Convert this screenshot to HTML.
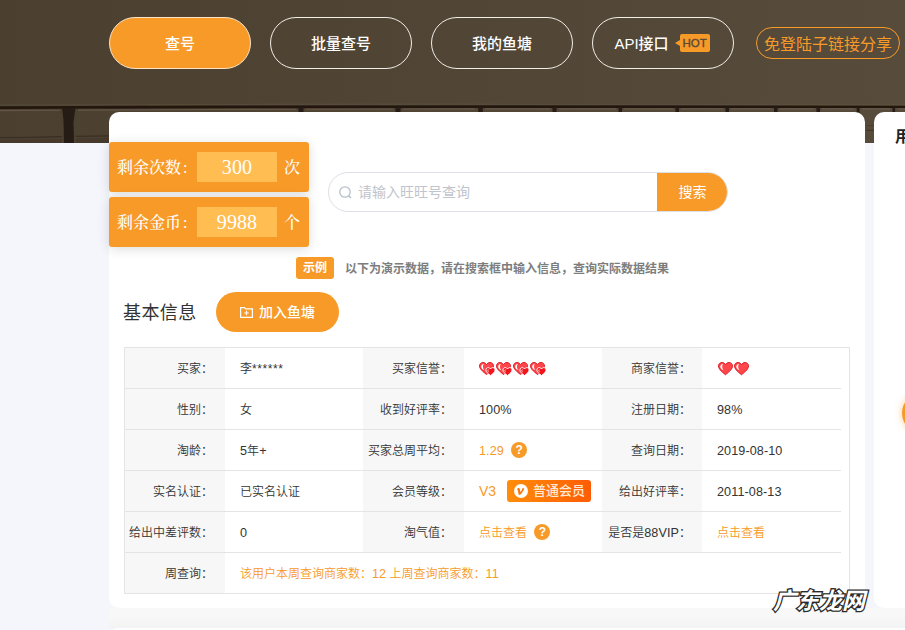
<!DOCTYPE html>
<html lang="zh-CN">
<head>
<meta charset="utf-8">
<title>查号</title>
<style>
*{box-sizing:border-box;margin:0;padding:0}
html,body{width:905px;height:630px;overflow:hidden}
body{position:relative;background:#f5f6fb;font-family:"Liberation Sans","Noto Sans CJK SC",sans-serif;color:#333;font-size:12px}
.abs{position:absolute}
#hdr{position:absolute;left:0;top:0;width:905px;height:143px;background:linear-gradient(90deg,#4b3f30,#574b3c);overflow:hidden}
#hdr svg{position:absolute;left:0;top:0}
.nav{position:absolute;top:17px;height:52px;width:142px;border-radius:26px;border:1px solid #f2eee8;color:#fff;font-size:15px;font-weight:500;text-align:center;line-height:52px;white-space:nowrap}
.nav.on{background:#f79a28;border-color:#fbe3c4}
.hot{display:inline-block;position:relative;background:#f79a28;color:#57483a;font-size:12px;line-height:18px;height:18px;width:30px;text-align:center;border-radius:2px;margin-left:11px;margin-right:2px;vertical-align:2px;font-weight:400;font-size:11.5px;letter-spacing:-.1px;-webkit-text-stroke:.35px #57483a}
.hot:before{content:"";position:absolute;left:-5px;top:6px;border:3px solid transparent;border-left:0;border-right:5px solid #f79a28}
#share{position:absolute;left:756px;top:27px;width:144px;height:32px;border:1px solid #f79a28;border-radius:16px;color:#f79a28;font-size:16px;line-height:33px;text-align:center;white-space:nowrap}
#mid{position:absolute;left:109px;top:608px;width:796px;height:20px;background:linear-gradient(#f8f8f8 40%,#f3f3f3)}
#card{position:absolute;left:109px;top:112px;width:756px;height:496px;background:#fff;border-radius:10px}
#card2{position:absolute;left:109px;top:628px;width:820px;height:20px;background:#fff;border-radius:10px}
#rcard{position:absolute;left:874px;top:112px;width:60px;height:496px;background:#fff;border-radius:10px}
.cnt{position:absolute;left:109px;width:200px;height:50px;background:#f79a28;border-radius:3px;box-shadow:0 2px 12px rgba(0,0,0,.14);color:#fff;font-family:"Liberation Serif","Noto Serif CJK SC",serif;font-size:16px;line-height:51px;font-weight:500}
.cnt .l{position:absolute;left:8px;top:0}
.cnt .n{position:absolute;left:88px;top:10px;width:80px;height:30px;background:#ffbd52;text-align:center;line-height:30px;font-size:20px;font-weight:400}
.cnt .l b{font-weight:inherit;margin-left:2px}
.cnt .u{position:absolute;left:175px;top:0}
#search{position:absolute;left:328px;top:172px;width:400px;height:40px;border:1px solid #dcdfe6;border-radius:20px;background:#fff;overflow:hidden}
#search .ph{position:absolute;left:29px;top:0;line-height:39px;font-size:14px;color:#c0c4cc}
#search .btn{position:absolute;right:-1px;top:-1px;width:71px;height:40px;background:#f79a28;color:#fff;font-size:14px;line-height:41px;text-align:center}
#search svg{position:absolute;left:9px;top:12px}
#eg{position:absolute;left:296px;top:257px;width:38px;height:22px;background:#f79a28;border-radius:3px;color:#fff;font-size:12px;font-weight:700;line-height:23px;text-align:center}
#egt{position:absolute;left:345px;top:258px;line-height:22px;font-size:12px;font-weight:700;color:#7d7d7d;white-space:nowrap}
#h{position:absolute;left:123px;top:299px;font-size:18px;line-height:28px;color:#333;letter-spacing:.4px}
#add{position:absolute;left:216px;top:292px;width:123px;height:40px;border-radius:20px;background:#f79a28;color:#fff;font-size:14px;font-weight:500;line-height:40px;padding-left:43px}
#add svg{position:absolute;left:24px;top:14px}
#tbl{font-weight:350;position:absolute;left:124px;top:347px;width:726px;height:247px;border:1px solid #e4e4e4;background:#fff}
.row{position:absolute;left:0;width:716px;height:41px;border-bottom:1px solid #e4e4e4}
.lab{position:absolute;top:0;height:40px;background:#f7f7f7;text-align:right;padding-right:12px;line-height:42px;color:#333;white-space:nowrap}
.val{position:absolute;top:0;height:40px;line-height:42px;padding-left:15px;white-space:nowrap}
.l3{padding-right:11px}
.or{color:#f79a28}
.hb,.hs{vertical-align:-2.5px}
.hs{margin-right:0;margin-left:0}
.hs:first-child{margin-left:1px}
.q{display:inline-block;width:16px;height:16px;border-radius:50%;background:#f79a28;color:#fff;font-size:12px;font-weight:700;line-height:16px;text-align:center;vertical-align:1px;margin-left:4px}
.v3{font-size:14px;position:relative;top:-1.5px}
.mem{position:absolute;left:43px;top:9px;width:84px;height:22px;border-radius:3px;background:linear-gradient(90deg,#ff8d0a,#ff5c05);color:#ffe9d4;font-size:13px;font-weight:500;line-height:22px;padding-left:26px;letter-spacing:0}
.mem i{position:absolute;left:7px;top:4px;width:14px;height:14px;border-radius:50%;background:#fff}
.mem svg{position:absolute;left:7px;top:4px}
.n{font-size:12.6px;letter-spacing:.1px}
#wm{position:absolute;left:773px;top:586px;font-size:23px;line-height:30px;font-weight:700;font-style:italic;color:#fff;-webkit-text-stroke:2.6px #2a2a2a;paint-order:stroke fill;white-space:nowrap;letter-spacing:0}
#rt{position:absolute;left:895px;top:127px;font-size:16px;font-weight:700;line-height:20px;color:#222}
#ball{position:absolute;left:902px;top:393px;width:40px;height:40px;border-radius:50%;background:#f79a28;box-shadow:0 0 7px rgba(247,154,40,.5)}
</style>
</head>
<body>
<div id="hdr"><svg width="905" height="143" viewBox="0 0 905 143">
<defs><filter id="b1" x="-5%" y="-50%" width="110%" height="200%"><feGaussianBlur stdDeviation="0.55"/></filter></defs>
<path d="M0 105.2 L226 104.5 L452 104.2 L905 104.6" stroke="#5f5344" stroke-width="1.2" fill="none" opacity=".55"/>
<path d="M0 106.3 L226 105.6 L452 105.3 L905 105.7 L905 108 L452 107.9 L226 108.3 L0 109.1Z" fill="#22180f" filter="url(#b1)"/>
<path d="M0 110.6 L60 110.3 M78 110.1 L226 109.5 L296 109.2 M306 109.2 L393 109 M403 109 L475 108.9 M485 108.9 L550 108.9 M559 108.9 L616 108.9 M624 108.9 L673 108.9 M681 108.9 L723 108.9 M731 108.9 L771 108.9 M780 108.9 L814 108.9 M822 108.9 L854 108.9 M862 108.9 L890 108.9 M898 108.9 L905 108.9" stroke="#6b5f50" stroke-width="1.1" fill="none" opacity=".75"/>
<g fill="#261c12" filter="url(#b1)">
<path d="M62 108 L75.500 108 L73.500 122 L74 143 L64 143 L63.500 120Z"/>
<rect x="298.500" y="107" width="5" height="8"/><rect x="395.500" y="107" width="5" height="8"/><rect x="478.300" y="107" width="4.500" height="8"/><rect x="552.500" y="107" width="4" height="8"/><rect x="618.500" y="107" width="3.500" height="8"/><rect x="675.500" y="107" width="3.500" height="8"/><rect x="725.500" y="107" width="3.500" height="8"/><rect x="774" y="107" width="3.500" height="8"/><rect x="816.500" y="107" width="3.500" height="8"/><rect x="856.700" y="107" width="2.800" height="8"/><rect x="892.500" y="107" width="2.600" height="8"/>
</g>
<path d="M0 137.600 L30 137.400 L62 136.600 M76 136.400 L110 135.800" stroke="#3a2f23" stroke-width="1.300" fill="none"/>
<path d="M0 140 L62 139 L62 143 L0 143Z M76 138.600 L110 138 L110 143 L76 143Z" fill="#463a2c"/>
<path d="M866 130.300 L874 130.300" stroke="#3f3428" stroke-width="1" /><path d="M866 125.500 L874 125.500" stroke="#4a3e30" stroke-width="1" />
</svg></div>
<div class="nav on" style="left:109px">查号</div>
<div class="nav" style="left:270px">批量查号</div>
<div class="nav" style="left:431px">我的鱼塘</div>
<div class="nav" style="left:592px">API接口<span class="hot">HOT</span></div>
<div id="share">免登陆子链接分享</div>

<div id="mid"></div>
<div id="card"></div>
<div id="card2"></div>
<div id="rcard"></div>

<div class="cnt" style="top:142px"><span class="l">剩余次数<b>:</b></span><span class="n">300</span><span class="u">次</span></div>
<div class="cnt" style="top:197px"><span class="l">剩余金币<b>:</b></span><span class="n">9988</span><span class="u">个</span></div>

<div id="search">
<svg width="16" height="16" viewBox="0 0 16 16"><circle cx="7" cy="7" r="5.200" fill="none" stroke="#b7bfcc" stroke-width="1.300"/><path d="M10.700 10.700L13 13" stroke="#b7bfcc" stroke-width="1.300" fill="none"/></svg>
<span class="ph">请输入旺旺号查询</span><div class="btn">搜索</div></div>

<div id="eg">示例</div>
<div id="egt">以下为演示数据，请在搜索框中输入信息，查询实际数据结果</div>

<div id="h">基本信息</div>
<div id="add"><svg width="13" height="12" viewBox="0 0 13 12"><path d="M.6 1.6h4l1 1.2h6.8v8.6H.6z" fill="none" stroke="#fff" stroke-width="1.2"/><path d="M6.5 4.8v4.4M4.3 7h4.4" stroke="#fff" stroke-width="1.2"/></svg>加入鱼塘</div>

<div id="tbl">
 <div class="row" style="top:0">
  <div class="lab" style="left:0;width:100px">买家：</div><div class="val" style="left:100px">李<span style="letter-spacing:.6px">******</span></div>
  <div class="lab" style="left:238px;width:101px">买家信誉：</div><div class="val" style="left:339px"><svg class="hb" width="17" height="14" viewBox="0 0 17 14"><path d="M7.500 12.500C3.100 9 .500 6.500 .500 3.900 .500 1.900 2.100 .500 3.900 .500c1.500 0 2.800 .800 3.600 2.100C8.200 1.300 9.600 .500 11 .500c1.900 0 3.500 1.400 3.500 3.400 0 2.600-2.600 5.100-7 8.600z" fill="#ff474b" stroke="#dc1f26" stroke-width="1"/><path d="M4.800 1.700C1.300 2.600 1.300 6.600 5.200 8 3.600 6 3.600 3.500 4.800 1.700z" fill="#fff"/><path d="M11.500 13.600C8.700 11.400 6.900 9.800 6.900 8c0-1.300 1-2.400 2.400-2.400 .900 0 1.700 .500 2.200 1.300 .500-.800 1.300-1.300 2.200-1.300 1.400 0 2.400 1.100 2.400 2.400 0 1.800-1.800 3.400-4.600 5.600z" fill="#f2151b" stroke="#fff" stroke-width="1"/><path d="M9.700 6.900c-1.700 .700-1.700 2.700 .300 3.800-.900-1.200-.900-2.700-.300-3.800z" fill="#fff"/></svg><svg class="hb" width="17" height="14" viewBox="0 0 17 14"><path d="M7.500 12.500C3.100 9 .500 6.500 .500 3.900 .500 1.900 2.100 .500 3.900 .500c1.500 0 2.800 .800 3.600 2.100C8.200 1.300 9.600 .500 11 .500c1.900 0 3.500 1.400 3.500 3.400 0 2.600-2.600 5.100-7 8.600z" fill="#ff474b" stroke="#dc1f26" stroke-width="1"/><path d="M4.800 1.700C1.300 2.600 1.300 6.600 5.200 8 3.600 6 3.600 3.500 4.800 1.700z" fill="#fff"/><path d="M11.500 13.600C8.700 11.400 6.900 9.800 6.900 8c0-1.300 1-2.400 2.400-2.400 .900 0 1.700 .500 2.200 1.300 .500-.800 1.300-1.300 2.200-1.300 1.400 0 2.400 1.100 2.400 2.400 0 1.800-1.800 3.400-4.600 5.600z" fill="#f2151b" stroke="#fff" stroke-width="1"/><path d="M9.700 6.900c-1.700 .700-1.700 2.700 .300 3.800-.900-1.200-.900-2.700-.300-3.800z" fill="#fff"/></svg><svg class="hb" width="17" height="14" viewBox="0 0 17 14"><path d="M7.500 12.500C3.100 9 .500 6.500 .500 3.900 .500 1.900 2.100 .500 3.900 .500c1.500 0 2.800 .800 3.600 2.100C8.200 1.300 9.600 .500 11 .500c1.900 0 3.500 1.400 3.500 3.400 0 2.600-2.600 5.100-7 8.600z" fill="#ff474b" stroke="#dc1f26" stroke-width="1"/><path d="M4.800 1.700C1.300 2.600 1.300 6.600 5.200 8 3.600 6 3.600 3.500 4.800 1.700z" fill="#fff"/><path d="M11.500 13.600C8.700 11.400 6.900 9.800 6.900 8c0-1.300 1-2.400 2.400-2.400 .900 0 1.700 .500 2.200 1.300 .500-.800 1.300-1.300 2.200-1.300 1.400 0 2.400 1.100 2.400 2.400 0 1.800-1.800 3.400-4.600 5.600z" fill="#f2151b" stroke="#fff" stroke-width="1"/><path d="M9.700 6.900c-1.700 .700-1.700 2.700 .300 3.800-.900-1.200-.900-2.700-.300-3.800z" fill="#fff"/></svg><svg class="hb" width="17" height="14" viewBox="0 0 17 14"><path d="M7.500 12.500C3.100 9 .500 6.500 .500 3.900 .500 1.900 2.100 .500 3.900 .500c1.500 0 2.800 .800 3.600 2.100C8.200 1.300 9.600 .500 11 .500c1.900 0 3.500 1.400 3.500 3.400 0 2.600-2.600 5.100-7 8.600z" fill="#ff474b" stroke="#dc1f26" stroke-width="1"/><path d="M4.800 1.700C1.300 2.600 1.300 6.600 5.200 8 3.600 6 3.600 3.500 4.800 1.700z" fill="#fff"/><path d="M11.500 13.600C8.700 11.400 6.900 9.800 6.900 8c0-1.300 1-2.400 2.400-2.400 .900 0 1.700 .500 2.200 1.300 .500-.800 1.300-1.300 2.200-1.300 1.400 0 2.400 1.100 2.400 2.400 0 1.800-1.800 3.400-4.600 5.600z" fill="#f2151b" stroke="#fff" stroke-width="1"/><path d="M9.700 6.900c-1.700 .700-1.700 2.700 .300 3.800-.900-1.200-.900-2.700-.300-3.800z" fill="#fff"/></svg></div>
  <div class="lab l3" style="left:477px;width:100px">商家信誉：</div><div class="val" style="left:577px"><svg class="hs" width="16" height="14" viewBox="0 0 16 14"><path d="M7.500 12.700C3 9.200 .500 6.600 .500 3.900 .500 1.900 2 .500 3.900 .500c1.500 0 2.900 .900 3.600 2.100C8.200 1.400 9.600 .500 11.100 .500c1.900 0 3.400 1.400 3.400 3.400 0 2.700-2.500 5.300-7 8.800z" fill="#ff474b" stroke="#dc1f26" stroke-width="1"/><path d="M5 1.800C1.400 2.800 1.400 6.800 5.400 8.300 3.800 6.200 3.800 3.600 5 1.800z" fill="#fff"/></svg><svg class="hs" width="16" height="14" viewBox="0 0 16 14"><path d="M7.500 12.700C3 9.200 .500 6.600 .500 3.900 .500 1.900 2 .500 3.900 .500c1.500 0 2.900 .900 3.600 2.100C8.200 1.400 9.600 .500 11.100 .500c1.900 0 3.400 1.400 3.400 3.400 0 2.700-2.500 5.300-7 8.800z" fill="#ff474b" stroke="#dc1f26" stroke-width="1"/><path d="M5 1.800C1.400 2.800 1.400 6.800 5.400 8.300 3.800 6.200 3.800 3.600 5 1.800z" fill="#fff"/></svg></div>
 </div>
 <div class="row" style="top:41px">
  <div class="lab" style="left:0;width:100px">性别：</div><div class="val" style="left:100px">女</div>
  <div class="lab" style="left:238px;width:101px">收到好评率：</div><div class="val" style="left:339px"><span class="n">100%</span></div>
  <div class="lab l3" style="left:477px;width:100px">注册日期：</div><div class="val" style="left:577px"><span class="n">98%</span></div>
 </div>
 <div class="row" style="top:82px">
  <div class="lab" style="left:0;width:100px">淘龄：</div><div class="val" style="left:100px"><span class="n">5</span>年<span class="n">+</span></div>
  <div class="lab" style="left:238px;width:101px">买家总周平均：</div><div class="val or" style="left:339px"><span class="n">1.29</span> <span class="q">?</span></div>
  <div class="lab l3" style="left:477px;width:100px">查询日期：</div><div class="val" style="left:577px"><span class="n">2019-08-10</span></div>
 </div>
 <div class="row" style="top:123px">
  <div class="lab" style="left:0;width:100px">实名认证：</div><div class="val" style="left:100px">已实名认证</div>
  <div class="lab" style="left:238px;width:101px">会员等级：</div><div class="val or" style="left:339px"><span class="v3">V3</span><span class="mem"><svg width="14" height="14" viewBox="0 0 14 14"><circle cx="7" cy="7" r="7" fill="#fff"/><path d="M3.600 4.200c1.100-.5 1.900-.2 2.200.8l.7 3.300c1-1.300 1.700-2.700 2.100-4.200l1.800.3c-.9 2.400-2.300 4.500-4.200 6.300l-1.500.1-.9-4.600c-.1-.5-.4-.7-.9-.5z" fill="#ff7408"/></svg>普通会员</span></div>
  <div class="lab l3" style="left:477px;width:100px">给出好评率：</div><div class="val" style="left:577px"><span class="n">2011-08-13</span></div>
 </div>
 <div class="row" style="top:164px">
  <div class="lab" style="left:0;width:100px">给出中差评数：</div><div class="val" style="left:100px"><span class="n">0</span></div>
  <div class="lab" style="left:238px;width:101px">淘气值：</div><div class="val or" style="left:339px">点击查看 <span class="q">?</span></div>
  <div class="lab l3" style="left:477px;width:100px">是否是<span class="n">88VIP</span>：</div><div class="val or" style="left:577px">点击查看</div>
 </div>
 <div class="row" style="top:205px">
  <div class="lab" style="left:0;width:100px">周查询：</div><div class="val or" style="left:100px">该用户本周查询商家数：<span class="n">12</span> 上周查询商家数：<span class="n">11</span></div>
 </div>
</div>
<div id="rt">用</div>
<div id="ball"></div>
<div id="wm">广东龙网</div>
</body>
</html>
